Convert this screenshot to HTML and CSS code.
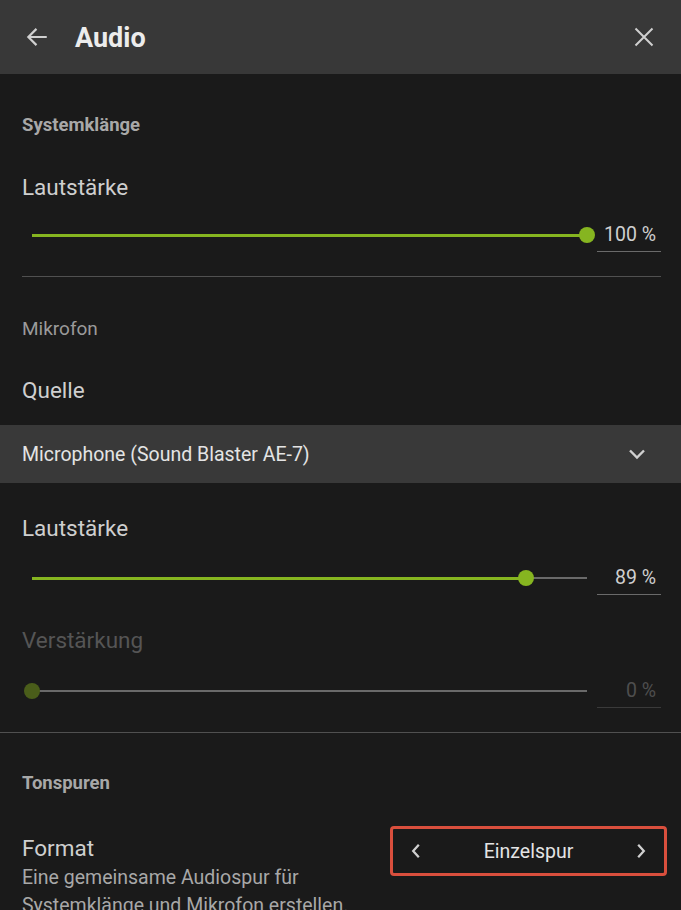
FILE: index.html
```html
<!DOCTYPE html>
<html lang="de">
<head>
<meta charset="utf-8">
<title>Audio</title>
<link rel="stylesheet" href="styles.css">
</head>
<body>
<div class="panel">
  <header class="topbar">
    <svg class="icon back" viewBox="0 0 24 24" width="26" height="26"><path d="M21 12H4.5M11.5 4.5L4 12l7.5 7.5" fill="none" stroke="#d0d0d0" stroke-width="2"/></svg>
    <h1 class="title">Audio</h1>
    <svg class="icon close" viewBox="0 0 24 24" width="24" height="24"><path d="M3.5 3.5l17 17M20.5 3.5l-17 17" fill="none" stroke="#d0d0d0" stroke-width="2"/></svg>
  </header>

  <section class="section">
    <h2 class="section-title">Systemklänge</h2>
    <div class="label">Lautstärke</div>
    <div class="slider-row">
      <div class="track">
        <div class="fill" style="width:100%"></div>
        <div class="thumb" style="left:100%"></div>
      </div>
      <div class="value">100 %</div>
    </div>
  </section>

  <div class="divider inset"></div>

  <section class="section mic">
    <h2 class="section-title plain">Mikrofon</h2>
    <div class="label">Quelle</div>
  </section>

  <div class="dropdown">
    <span>Microphone (Sound Blaster AE-7)</span>
    <svg viewBox="0 0 20 20" width="20" height="20"><path d="M3 6.5l7 7 7-7" fill="none" stroke="#d0d0d0" stroke-width="2.4"/></svg>
  </div>

  <section class="section mic2">
    <div class="label">Lautstärke</div>
    <div class="slider-row">
      <div class="track">
        <div class="fill" style="width:89%"></div>
        <div class="thumb" style="left:89%"></div>
      </div>
      <div class="value">89 %</div>
    </div>
    <div class="label disabled gain">Verstärkung</div>
    <div class="slider-row disabled">
      <div class="track">
        <div class="fill" style="width:0%"></div>
        <div class="thumb" style="left:0%"></div>
      </div>
      <div class="value">0 %</div>
    </div>
  </section>

  <div class="divider full"></div>

  <section class="section tracks">
    <h2 class="section-title">Tonspuren</h2>
    <div class="format-row">
      <div class="format-text">
        <div class="label">Format</div>
        <p class="desc">Eine gemeinsame Audiospur für Systemklänge und Mikrofon erstellen.</p>
      </div>
      <div class="stepper">
        <svg viewBox="0 0 16 16" width="18" height="18"><path d="M10.5 2.5L5.5 8l5 5.5" fill="none" stroke="#d0d0d0" stroke-width="2"/></svg>
        <span>Einzelspur</span>
        <svg viewBox="0 0 16 16" width="18" height="18"><path d="M5.5 2.5l5 5.5-5 5.5" fill="none" stroke="#d0d0d0" stroke-width="2"/></svg>
      </div>
    </div>
  </section>
</div>
</body>
</html>
```

FILE: styles.css
```css
* { box-sizing: border-box; }
html, body { margin: 0; padding: 0; }
body {
  background: #1a1a1a;
  font-family: Roboto, "Noto Sans", sans-serif;
  color: #cfcfcf;
  width: 681px;
  height: 910px;
  overflow: hidden;
}
.panel { display: flex; flex-direction: column; }
.topbar {
  height: 74px;
  background: #383838;
  display: flex;
  align-items: center;
  padding: 0 25px 0 24px;
}
.topbar .back { margin-right: 25px; }
.title {
  margin: 0;
  flex: 1;
  font-size: 27px;
  font-weight: 700;
  color: #ececec;
  line-height: 32px;
  padding-top: 2px;
}
.section { padding: 0 20px 0 22px; }
.section-title {
  margin: 0;
  font-size: 18.5px;
  font-weight: 700;
  color: #a8a8a8;
  padding-top: 40px;
  line-height: 22px;
}
.section-title.plain { font-weight: 400; color: #9a9a9a; font-size: 19px; }
.label {
  font-size: 22.5px;
  color: #cfcfcf;
  line-height: 26px;
  margin-top: 38px;
}
.slider-row {
  display: flex;
  align-items: center;
  margin-top: 18px;
  height: 34px;
}
.track {
  position: relative;
  flex: 1;
  height: 2px;
  background: #6a6a6a;
  margin: 0 10px 0 10px;
}
.fill { position: absolute; left: 0; top: -0.5px; height: 3px; background: #86b520; }
.thumb {
  position: absolute;
  top: 1px;
  width: 16px;
  height: 16px;
  border-radius: 50%;
  background: #86b520;
  transform: translate(-50%, -50%);
}
.value {
  width: 64px;
  height: 34px;
  border-bottom: 1px solid #6a6a6a;
  text-align: right;
  padding-right: 5px;
  font-size: 19.5px;
  line-height: 34px;
  color: #cfcfcf;
}
.slider-row.disabled .thumb { background: #4a5d1a; }
.slider-row.disabled .value { color: #4e4e4e; border-bottom-color: #3a3a3a; }
.label.disabled { color: #555555; }
.divider { height: 1px; background: #505050; }
.divider.inset { margin: 24px 20px 0 22px; }
.mic .section-title { padding-top: 41px; }
.mic .label { margin-top: 37px; }
.mic { padding-bottom: 22px; }
.dropdown {
  height: 58px;
  background: #393939;
  display: flex;
  align-items: center;
  justify-content: space-between;
  padding: 0 34px 0 22px;
  font-size: 19.5px;
  color: #e4e4e4;
}
.mic2 .label:first-child { margin-top: 32px; }
.mic2 .slider-row { margin-top: 20px; }
.mic2 .label.gain { margin-top: 32px; }
.mic2 .slider-row.disabled { margin-top: 21px; }
.divider.full { margin-top: 24px; }
.tracks .section-title { padding-top: 39px; }
.format-row {
  display: flex;
  align-items: flex-start;
  margin-top: 31px;
  justify-content: space-between;
}
.format-row .label { margin-top: 10px; }
.desc {
  margin: 3px 0 0;
  font-size: 19.5px;
  line-height: 28px;
  color: #a8a8a8;
  width: 340px;
}
.stepper {
  width: 277px;
  height: 50px;
  margin-top: 1px;
  border: 3px solid #d94f3d;
  border-radius: 4px;
  display: flex;
  align-items: center;
  justify-content: space-between;
  padding: 0 14px;
  margin-right: -6px;
  font-size: 19.5px;
  color: #e4e4e4;
}
```
